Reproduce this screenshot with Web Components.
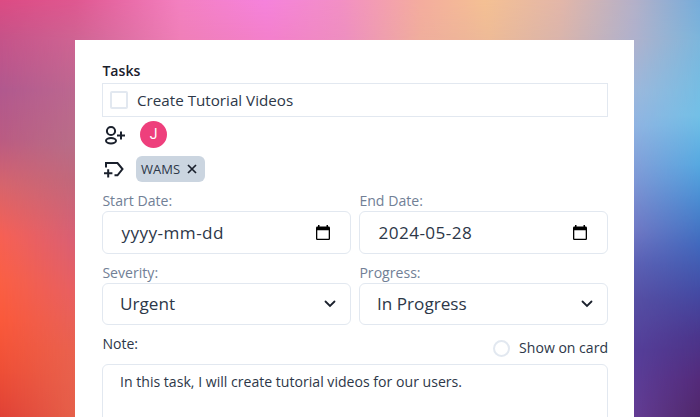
<!DOCTYPE html>
<html lang="en">
<head>
<meta charset="utf-8">
<title>Task details</title>
<style>
html,body{margin:0;height:417px;overflow:hidden}
body{font-family:"Open Sans","Noto Sans",sans-serif;color:#2d3748}
</style>
</head>
<body>
<color-backdrop>
 <task-panel>
  <task-item>Create Tutorial Videos</task-item>
  <people-row></people-row>
  <label-row>WAMS</label-row>
  <field-grid>
   <form-field label="Start Date:" icon="calendar" class="date">yyyy-mm-dd</form-field>
   <form-field label="End Date:" icon="calendar" class="date">2024-05-28</form-field>
   <form-field label="Severity:" icon="chevron">Urgent</form-field>
   <form-field label="Progress:" icon="chevron">In Progress</form-field>
  </field-grid>
  <task-note>In this task, I will create tutorial videos for our users.</task-note>
 </task-panel>
</color-backdrop>
<script>
const define = (name, html, setup) => customElements.define(name, class extends HTMLElement {
  constructor() {
    super();
    this.attachShadow({mode: 'open'}).innerHTML = '<style>:host,*{box-sizing:border-box}</style>' + html;
  }
  connectedCallback() { if (setup) setup(this, this.shadowRoot); }
});

define('color-backdrop', `<style>
:host{display:grid;width:700px;height:417px;overflow:hidden;grid-template:40px 377px / 75px 559px 66px}
.wash{position:relative}
.wash::after{content:"";position:absolute;inset:0}
.top{grid-area:1/1/2/4;background:linear-gradient(90deg,#c55389 0,#cf6493 75px,#f07fb8 180px,#f480cc 270px,#ee8fc0 345px,#f0ae9d 420px,#eebb97 490px,#dab5ac 560px,#b0b2cd 634px,#7cb6dc 700px)}
.top::after{background:linear-gradient(90deg,#dc4b83 0,#df5790 75px,#f380c0 180px,#f582dc 265px,#f28fc4 340px,#f4ac9e 420px,#f4c093 485px,#e3b6a8 560px,#b4b0c8 634px,#76acda 700px);mask-image:linear-gradient(#000,transparent)}
.left{grid-area:2/1;background:linear-gradient(#cf6493 0,#bd6890 50px,#b96e88 105px,#c2687c 140px,#da6074 200px,#e86062 250px,#ea624f 310px,#e6604a 377px)}
.left::after{background:linear-gradient(#c55389 0,#b0588e 50px,#ba5b82 100px,#d6646c 145px,#f66054 195px,#fa5f44 240px,#fa593a 280px,#ee4f36 330px,#df4136 377px);mask-image:linear-gradient(90deg,#000,transparent)}
.right{grid-area:2/3;background:linear-gradient(#b0b2cd 0,#9db8dc 50px,#90b4e2 85px,#7e98d6 140px,#7079c5 190px,#5c60b4 225px,#564fa4 260px,#553f9a 310px,#643c94 377px)}
.right::after{background:linear-gradient(#7cb6dc 0,#72c0e6 75px,#56a8e0 125px,#4a8cd2 160px,#4168bc 205px,#4449a2 255px,#4b368c 295px,#542a7a 340px,#502869 377px);mask-image:linear-gradient(270deg,#000,transparent)}
::slotted(task-panel){grid-area:2/2}
</style><div class="wash top"></div><div class="wash left"></div><div class="wash right"></div><slot></slot>`);

define('task-panel', `<style>
:host{display:flex;flex-direction:column;height:377px;background:#fff;padding:21px 26px 0 27px;overflow:hidden}
h2{flex:none;margin:0;height:22px;padding-left:.4px;font-size:14.1px;line-height:20px;font-weight:600;color:#1a202c}
</style><h2>Tasks</h2><slot></slot>`);

define('task-item', `<style>
:host{display:flex;flex:none;align-items:center;gap:9px;height:34px;padding:0 8px 0 7px;border:1px solid #e2e8f0;font-size:15.2px;line-height:22px}
i{width:18px;height:18px;border:2px solid #e2e8f0;border-radius:2px}
</style><i></i><span><slot></slot></span>`);

define('people-row', `<style>
:host{display:flex;flex:none;align-items:center;height:35px;gap:13px;padding-left:2px}
svg{margin-right:1px;margin-left:-1px}
b{display:grid;place-items:center;width:27px;height:27px;border-radius:50%;background:#ee3f7c;color:#fff;font:400 14px Roboto,sans-serif;margin-bottom:1px}
</style><svg width="23" height="22" viewBox="0 0 23 22" fill="none" stroke="#1a202c" stroke-width="2"><circle cx="8" cy="7" r="4.1"/><ellipse cx="8" cy="16.7" rx="5" ry="2.7"/><path d="M14 11.5h8M18 7.5v8"/></svg><b>J</b>`);

define('label-row', `<style>
:host{display:flex;flex:none;align-items:center;height:34px;gap:9px;padding-left:1px}
b{display:flex;align-items:center;width:69px;height:26px;border-radius:6px;background:#cbd5e0;padding-left:5px;gap:7px;font-size:13px;font-weight:400}
</style><svg width="24" height="22" viewBox="0 0 24 22" fill="none" stroke="#1a202c" stroke-width="2"><path d="M3 9.5V5h11.5l5 6.1-5 6.2h-3M1 15.3h8.4M5.2 11.2v8.4"/></svg><b><slot></slot><svg width="10" height="10" fill="none" stroke="#1a202c" stroke-width="1.7"><path d="M1 1l8 8M9 1l-8 8"/></svg></b>`);

define('field-grid', `<style>
:host{display:grid;flex:none;grid-template-columns:249px 249px;gap:0 8px;grid-template-rows:72px 71px;margin-top:5px}
</style><slot></slot>`);

const icons = {
  calendar: '<svg width="16" height="16" viewBox="0 0 16 16"><path fill="#000" fill-rule="evenodd" d="M3 0h1.5v1.5h7V0H13v1.5h.6A1.4 1.4 0 0 1 15 2.9v10.9a1.2 1.2 0 0 1-1.2 1.2H2.2A1.2 1.2 0 0 1 1 13.8V2.9a1.4 1.4 0 0 1 1.4-1.4H3zM2.3 5.3v8.4h11.4V5.3z"/></svg>',
  chevron: '<svg width="12" height="8" viewBox="0 0 12 8" fill="none" stroke="#1a202c" stroke-width="1.8" stroke-linecap="round"><path d="M1.5 1.5L6 6l4.5-4.5"/></svg>'
};
define('form-field', `<style>
:host{display:block}
label{display:block;height:20px;padding-left:.4px;font-size:14.1px;line-height:20px;color:#718096}
div{display:flex;align-items:center;justify-content:space-between;height:42px;border:1px solid #e2e8f0;border-radius:6px;padding:0 14px 0 17px;font-size:17.15px}
span{padding-bottom:1px}
:host(.date) span{padding:0}
:host(.date) div{height:43px;padding:0 19px 0 18.4px;letter-spacing:.45px}
</style><label></label><div><span><slot></slot></span><i></i></div>`, (el, root) => {
  root.querySelector('label').textContent = el.getAttribute('label');
  root.querySelector('i').outerHTML = icons[el.getAttribute('icon')];
});

define('task-note', `<style>
:host{display:block;flex:none;font-size:14.05px;line-height:20px}
header{display:flex;justify-content:space-between;height:30px;padding-left:.4px}
.show{display:flex;align-items:center;gap:9px;height:20px;margin-top:4px}
.show i{width:17px;height:17px;border:2px solid #e2e8f0;border-radius:50%}
.text{height:80px;border:1px solid #e2e8f0;border-radius:6px;padding:7px 17px;font-size:14.1px}
</style><header><span>Note:</span><span class="show"><i></i><span>Show on card</span></span></header><div class="text"><slot></slot></div>`);
</script>
</body>
</html>
